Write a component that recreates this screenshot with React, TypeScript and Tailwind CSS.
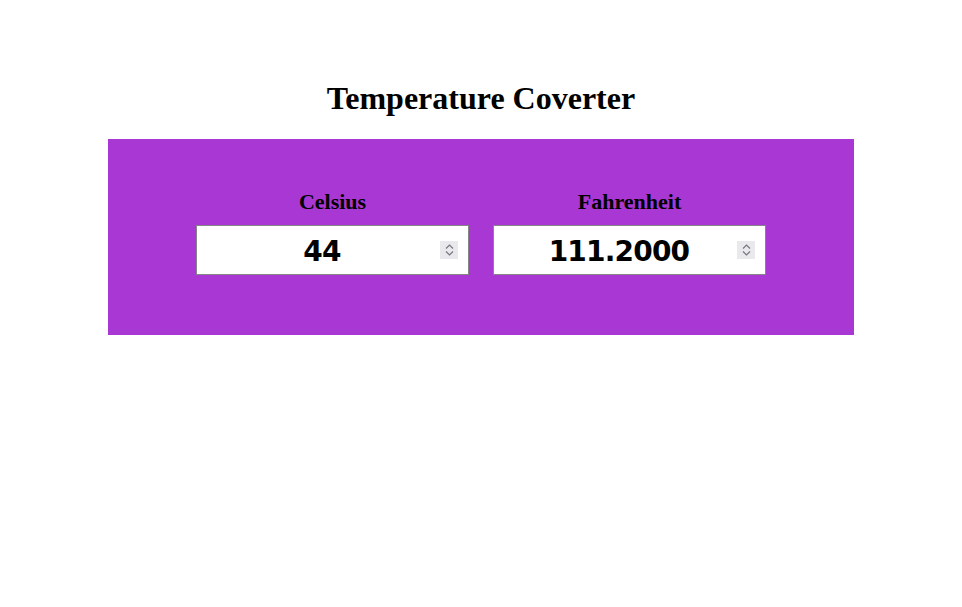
import { useState } from 'react';

const Spinner = () => (
  <div className="absolute right-[11px] top-1/2 -translate-y-1/2 w-[18px] h-[18px] bg-[#e9e9ed] flex flex-col items-center justify-center gap-[2px]">
    <svg width="9" height="5" viewBox="0 0 9 5" fill="none">
      <path d="M1 4.5 L4.5 1 L8 4.5" stroke="#77777f" strokeWidth="1.2" />
    </svg>
    <svg width="9" height="5" viewBox="0 0 9 5" fill="none">
      <path d="M1 0.5 L4.5 4 L8 0.5" stroke="#77777f" strokeWidth="1.2" />
    </svg>
  </div>
);

const Field = ({ label, value, onChange }: { label: string; value: string; onChange: (v: string) => void }) => (
  <div className="flex flex-col items-center">
    <label className="text-[22px] leading-[24px] font-bold text-black font-['Liberation_Serif',serif]">{label}</label>
    <div className="relative mt-[11px] w-[273px] h-[50px]">
      <input
        type="text"
        value={value}
        onChange={(e) => onChange(e.target.value)}
        className="w-full h-full border border-[#858585] bg-white pl-[9px] pr-[30px] pt-[3px] text-center text-[28px] tracking-[-0.8px] font-bold text-black font-['DejaVu_Sans',sans-serif] outline-none"
      />
      <Spinner />
    </div>
  </div>
);

const App = () => {
  const [celsius, setCelsius] = useState('44');
  const [fahrenheit, setFahrenheit] = useState('111.2000');

  const onCelsius = (v: string) => {
    setCelsius(v);
    const n = parseFloat(v);
    if (!isNaN(n)) setFahrenheit((n * 9 / 5 + 32).toFixed(4));
  };

  const onFahrenheit = (v: string) => {
    setFahrenheit(v);
    const n = parseFloat(v);
    if (!isNaN(n)) setCelsius(String(Math.round(((n - 32) * 5 / 9) * 10000) / 10000));
  };

  return (
    <div className="w-[962px] h-[607px] bg-white pt-[80px]">
      <h1 className="text-center text-[32px] leading-[36px] font-bold text-black font-['Liberation_Serif',serif]">
        Temperature Coverter
      </h1>
      <div className="mx-auto mt-[23px] w-[746px] h-[196px] bg-[#a937d4] pt-[51px] flex justify-center gap-[24px]">
        <Field label="Celsius" value={celsius} onChange={onCelsius} />
        <Field label="Fahrenheit" value={fahrenheit} onChange={onFahrenheit} />
      </div>
    </div>
  );
};

export default App;
